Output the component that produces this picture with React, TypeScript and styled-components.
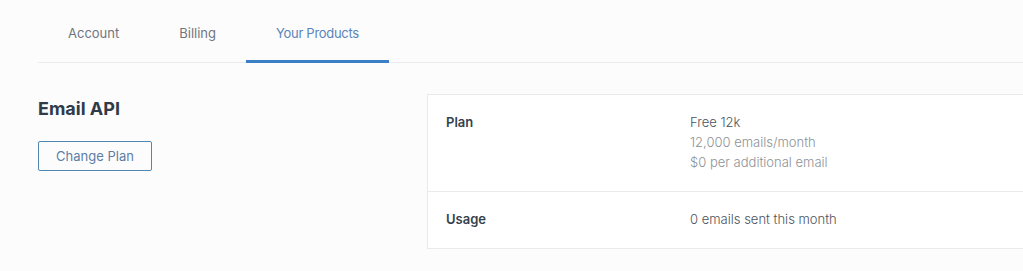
import React from 'react';
import styled, { createGlobalStyle } from 'styled-components';

const GlobalStyle = createGlobalStyle`
  html, body {
    margin: 0;
    padding: 0;
    overflow: hidden;
    background-color: #fcfcfd;
    font-family: Inter, "Noto Sans", "Liberation Sans", sans-serif;
  }
`;

const Page = styled.div`
  box-sizing: border-box;
  overflow: hidden;
  padding: 0 0 0 38px;
  width: 100%;
`;

const TabBar = styled.div`
  border-bottom: solid 1px #e9ebee;
  display: flex;
`;

const Tab = styled.div<{ $active?: boolean }>`
  border-bottom: solid 3px ${({ $active }) => ($active ? '#3b7fc4' : 'transparent')};
  color: ${({ $active }) => ($active ? '#5b84b8' : '#70767d')};
  font-size: 13px;
  letter-spacing: ${({ $active }) => ($active ? '-0.3px' : '0')};
  line-height: 20px;
  margin-bottom: -1px;
  padding: 23px 30px 17px;
`;

const Content = styled.div`
  display: flex;
  padding-top: 31px;
`;

const Side = styled.div`
  flex-shrink: 0;
  width: 389px;
`;

const Title = styled.h2`
  color: #2f3b48;
  font-size: 18px;
  font-weight: 700;
  line-height: 24px;
  margin: 3px 0 0;
`;

const Button = styled.button`
  background: transparent;
  border: solid 1px #4f87b2;
  border-radius: 2px;
  color: #5c7ea6;
  font-family: inherit;
  font-size: 13px;
  height: 30px;
  margin-top: 20px;
  padding: 0;
  width: 114px;
`;

const Card = styled.div`
  background-color: #ffffff;
  border: solid 1px #e8eaed;
  flex-shrink: 0;
  width: 640px;
`;

const Row = styled.div<{ $last?: boolean }>`
  border-bottom: ${({ $last }) => ($last ? 'none' : 'solid 1px #e8eaed')};
  display: grid;
  grid-template-columns: 244px 1fr;
  padding: ${({ $last }) => ($last ? '17px 18px 19px' : '17px 18px 19px')};
`;

const Label = styled.div`
  color: #35414d;
  font-size: 13px;
  font-weight: 600;
  line-height: 20px;
`;

const Value = styled.div<{ $muted?: boolean }>`
  color: ${({ $muted }) => ($muted ? '#8c9297' : '#4b535b')};
  font-size: 13px;
  font-weight: 300;
  line-height: 20px;
`;

const App: React.FC = () => (
  <>
    <GlobalStyle />
    <Page>
      <TabBar>
        <Tab>Account</Tab>
        <Tab>Billing</Tab>
        <Tab $active>Your Products</Tab>
      </TabBar>
      <Content>
        <Side>
          <Title>Email API</Title>
          <Button>Change Plan</Button>
        </Side>
        <Card>
          <Row>
            <Label>Plan</Label>
            <div>
              <Value>Free 12k</Value>
              <Value $muted>12,000 emails/month</Value>
              <Value $muted>$0 per additional email</Value>
            </div>
          </Row>
          <Row $last>
            <Label>Usage</Label>
            <Value>0 emails sent this month</Value>
          </Row>
        </Card>
      </Content>
    </Page>
  </>
);

export default App;
